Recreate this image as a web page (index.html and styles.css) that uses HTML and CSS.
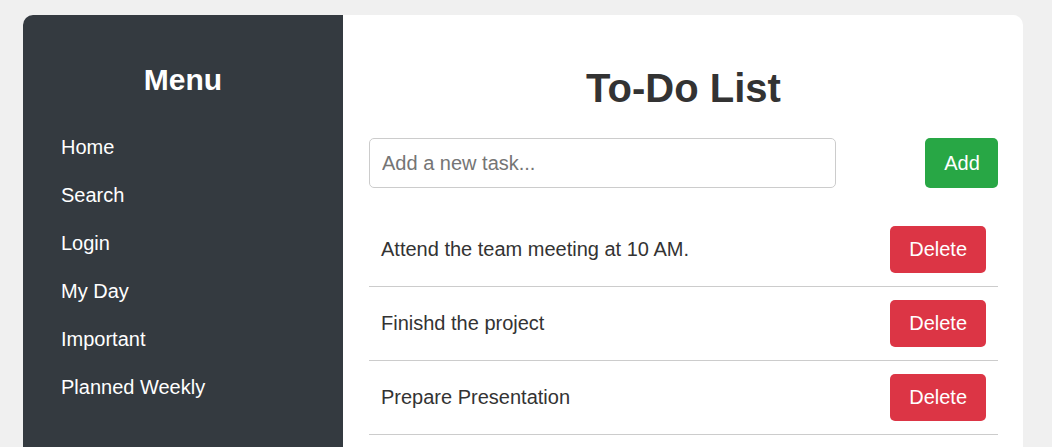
FILE: index.html
```html
<!DOCTYPE html>
<html lang="en">
<head>
<meta charset="utf-8">
<title>To-Do List</title>
<link rel="stylesheet" href="styles.css">
</head>
<body>
<div class="container">
  <aside class="sidebar">
    <h2 class="menu-title">Menu</h2>
    <ul class="menu">
      <li><a href="#">Home</a></li>
      <li><a href="#">Search</a></li>
      <li><a href="#">Login</a></li>
      <li><a href="#">My Day</a></li>
      <li><a href="#">Important</a></li>
      <li><a href="#">Planned Weekly</a></li>
    </ul>
  </aside>
  <main class="main">
    <h1 class="title">To-Do List</h1>
    <div class="add-row">
      <input class="task-input" type="text" placeholder="Add a new task...">
      <button class="btn btn-add">Add</button>
    </div>
    <ul class="tasks">
      <li class="task"><span class="task-text">Attend the team meeting at 10 AM.</span><button class="btn btn-delete">Delete</button></li>
      <li class="task"><span class="task-text">Finishd the project</span><button class="btn btn-delete">Delete</button></li>
      <li class="task"><span class="task-text">Prepare Presentation</span><button class="btn btn-delete">Delete</button></li>
    </ul>
  </main>
</div>
</body>
</html>
```
FILE: styles.css
```css
* { box-sizing: border-box; }
html, body { margin: 0; padding: 0; }
body {
  background: #f0f0f0;
  font-family: "Liberation Sans", Arial, sans-serif;
  color: #333;
}
.container {
  width: 1000px;
  margin: 15px 0 0 23px;
  display: flex;
  background: #fff;
  border-radius: 10px;
  overflow: hidden;
}
.sidebar {
  width: 320px;
  flex: none;
  background: #343a40;
  color: #fff;
  padding: 20px;
}
.menu-title {
  margin: 28px 0 26px;
  font-size: 30px;
  line-height: 34px;
  font-weight: bold;
  text-align: center;
}
.menu {
  list-style: none;
  margin: 0;
  padding: 0;
}
.menu a {
  display: block;
  padding: 12px 18px;
  font-size: 20px;
  line-height: 24px;
  color: #fff;
  text-decoration: none;
}
.main {
  flex: 1;
  padding: 25px 25px 25px 26px;
}
.title {
  margin: 25px 0 27px;
  font-size: 40px;
  line-height: 46px;
  font-weight: bold;
  text-align: center;
  color: #333;
}
.add-row {
  display: flex;
  align-items: stretch;
}
.task-input {
  width: 467px;
  padding: 12px 12px;
  font-family: inherit;
  font-size: 20px;
  line-height: 24px;
  border: 1px solid #ccc;
  border-radius: 5px;
  color: #333;
  outline: none;
}
.task-input::placeholder { color: #757575; }
.btn {
  border: none;
  border-radius: 5px;
  color: #fff;
  font-family: inherit;
  font-size: 20px;
  line-height: 23px;
  padding: 12px 19px;
  cursor: pointer;
}
.btn-add {
  margin-left: auto;
  padding: 12px 18px 12px 19px;
  width: 73px;
  background: #28a745;
}
.btn-delete {
  background: #dc3545;
}
.tasks {
  list-style: none;
  margin: 25px 0 0;
  padding: 0;
}
.task {
  display: flex;
  align-items: center;
  justify-content: space-between;
  padding: 13px 12px;
  border-bottom: 1px solid #ccc;
}
.task-text {
  font-size: 20px;
  line-height: 24px;
  padding-bottom: 2px;
  color: #333;
}
```
